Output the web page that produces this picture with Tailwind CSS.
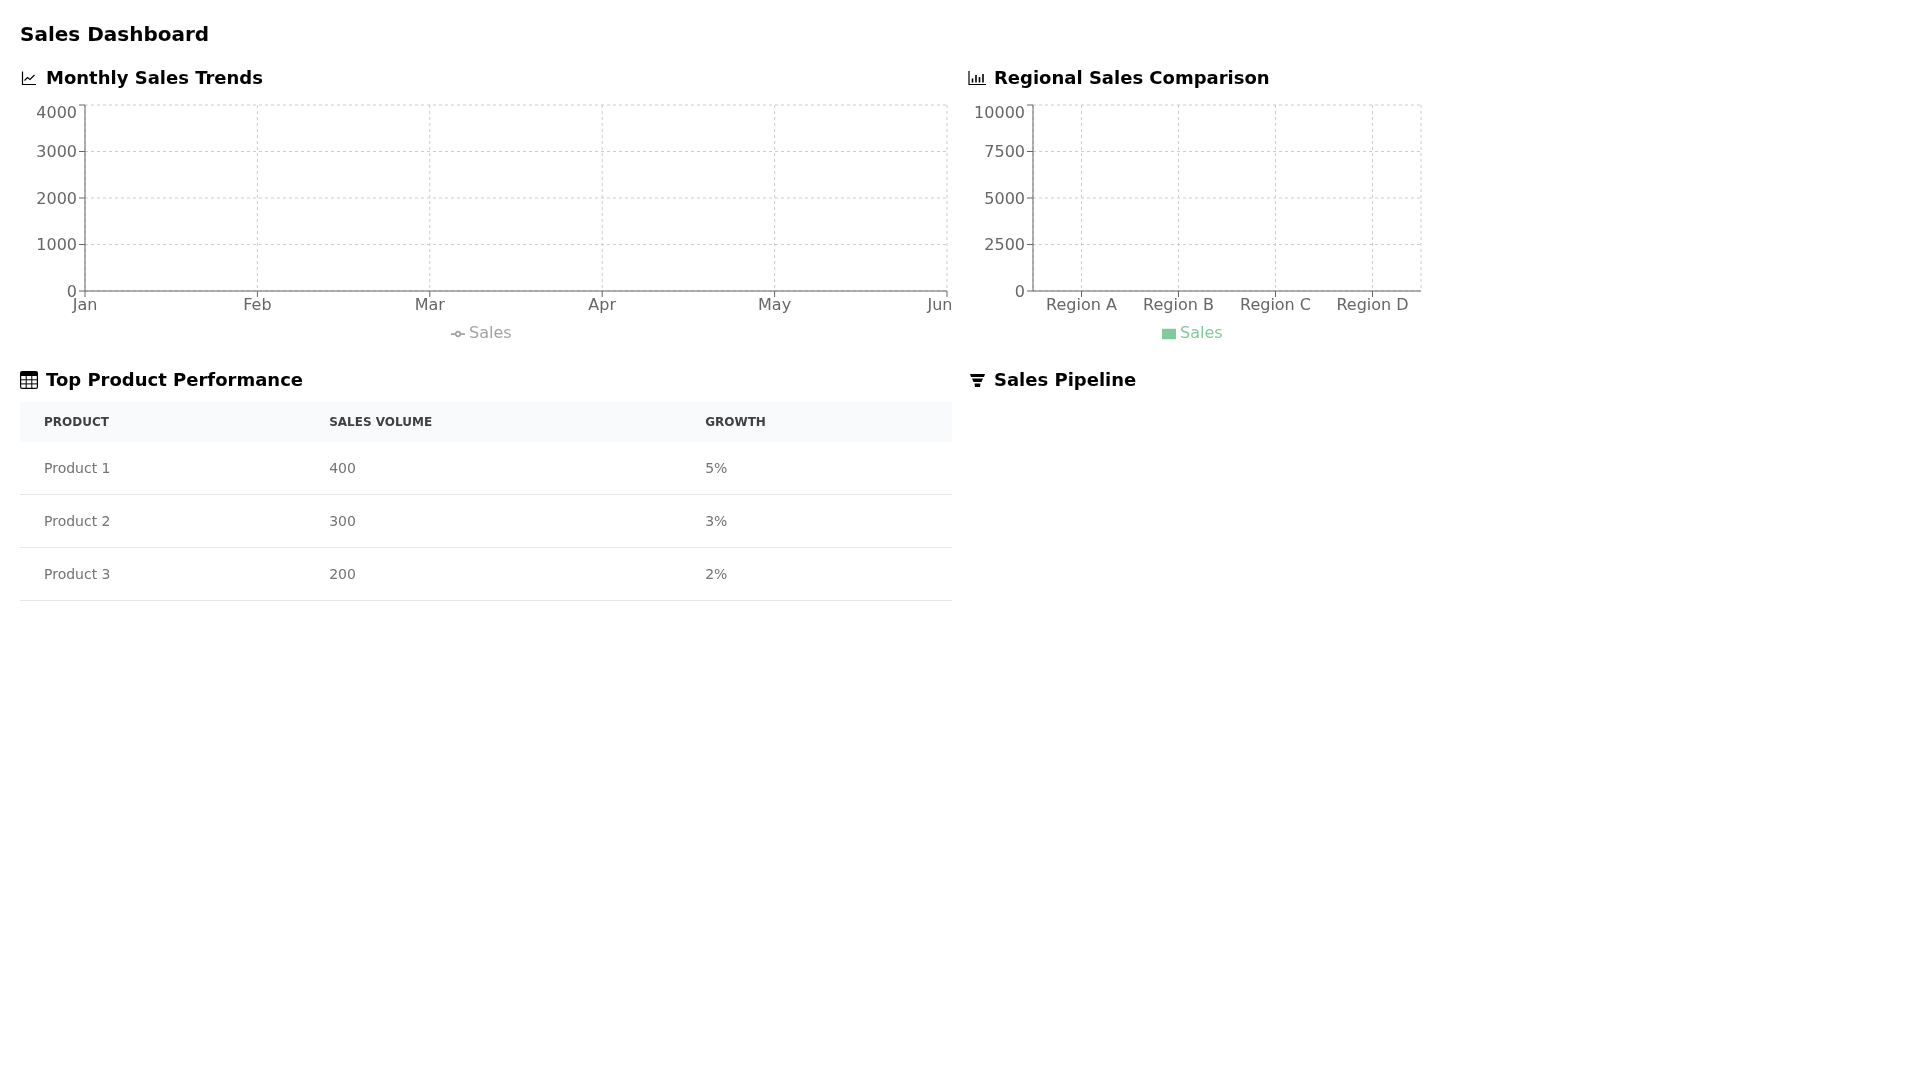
<!DOCTYPE html>
<html lang="en">
  <head>
    <meta charset="UTF-8" />
    <title>Sales Dashboard</title>
    <script src="https://cdn.jsdelivr.net/npm/@tailwindcss/browser@4"></script>
  </head>
  <body class="bg-white text-black font-['DejaVu_Sans',sans-serif]">
    <div class="p-5 will-change-transform">
      <h1 class="text-xl font-bold mb-4">Sales Dashboard</h1>
      <div class="grid grid-cols-2 gap-4">
        <!-- Monthly Sales Trends -->
        <div>
          <h2 class="text-lg font-semibold mb-2 flex items-center gap-2">
            <svg class="w-[18px] h-[18px] shrink-0" viewBox="0 0 18 18" fill="none" stroke="currentColor">
              <path d="M2.5 2.5V15.5H16" stroke-width="1.2" />
              <path d="M4.5 11.5L7.5 8.5L10 10.5L14.5 6" stroke-width="1.2" />
            </svg>
            Monthly Sales Trends
          </h2>
          <svg class="block" width="932" height="250" viewBox="0 0 932 250" font-size="16" fill="#666">
            <g stroke="#ccc" stroke-dasharray="3 3" fill="none">
              <path d="M65 5H927M65 51.5H927M65 98H927M65 144.5H927M65 191H927" />
              <path d="M65 5V191M237.4 5V191M409.8 5V191M582.2 5V191M754.6 5V191M927 5V191" />
            </g>
            <g stroke="#666" fill="none">
              <path d="M65 5V191M59 5H65M59 51.5H65M59 98H65M59 144.5H65M59 191H65" />
              <path d="M65 191H927M65 191V197M237.4 191V197M409.8 191V197M582.2 191V197M754.6 191V197M927 191V197" />
            </g>
            <g text-anchor="end">
              <text x="57" y="18">4000</text>
              <text x="57" y="57">3000</text>
              <text x="57" y="103.7">2000</text>
              <text x="57" y="150.2">1000</text>
              <text x="57" y="196.7">0</text>
            </g>
            <g text-anchor="middle">
              <text x="65" y="210.4">Jan</text>
              <text x="237.4" y="210.4">Feb</text>
              <text x="409.8" y="210.4">Mar</text>
              <text x="582.2" y="210.4">Apr</text>
              <text x="754.6" y="210.4">May</text>
              <text x="920" y="210.4">Jun</text>
            </g>
            <svg x="431" y="227" width="14" height="14" viewBox="0 0 32 32" fill="none" stroke="#a3a3a3" stroke-width="4">
              <path d="M0,16h10.67A5.33,5.33,0,1,1,21.33,16H32M21.33,16A5.33,5.33,0,1,1,10.67,16" />
            </svg>
            <text x="449" y="238" fill="#a3a3a3">Sales</text>
          </svg>
        </div>

        <!-- Regional Sales Comparison -->
        <div>
          <h2 class="text-lg font-semibold mb-2 flex items-center gap-2">
            <svg class="w-[18px] h-[18px] shrink-0" viewBox="0 0 18 18" fill="none" stroke="currentColor">
              <path d="M1 2V15.5H18" stroke-width="1.2" />
              <path d="M4.5 9.5V13.5M8 6V13.5M11.5 8V13.5M15 5V13.5" stroke-width="1.6" />
            </svg>
            Regional Sales Comparison
          </h2>
          <svg class="block" width="458" height="250" viewBox="0 0 458 250" font-size="16" fill="#666">
            <g stroke="#ccc" stroke-dasharray="3 3" fill="none">
              <path d="M65 5H453M65 51.5H453M65 98H453M65 144.5H453M65 191H453" />
              <path d="M65 5V191M113.5 5V191M210.5 5V191M307.5 5V191M404.5 5V191M453 5V191" />
            </g>
            <g stroke="#666" fill="none">
              <path d="M65 5V191M59 5H65M59 51.5H65M59 98H65M59 144.5H65M59 191H65" />
              <path d="M65 191H453M113.5 191V197M210.5 191V197M307.5 191V197M404.5 191V197" />
            </g>
            <g text-anchor="end">
              <text x="57" y="18">10000</text>
              <text x="57" y="57">7500</text>
              <text x="57" y="103.7">5000</text>
              <text x="57" y="150.2">2500</text>
              <text x="57" y="196.7">0</text>
            </g>
            <g text-anchor="middle">
              <text x="113.5" y="210.4">Region A</text>
              <text x="210.5" y="210.4">Region B</text>
              <text x="307.5" y="210.4">Region C</text>
              <text x="404.5" y="210.4">Region D</text>
            </g>
            <svg x="194" y="227" width="14" height="14" viewBox="0 0 32 32" fill="#82ca9d">
              <path d="M0,4h32v24h-32z" />
            </svg>
            <text x="212" y="238" fill="#82ca9d">Sales</text>
          </svg>
        </div>

        <!-- Top Product Performance -->
        <div>
          <h2 class="text-lg font-semibold mb-2 flex items-center gap-2">
            <svg class="w-[18px] h-[18px] shrink-0" viewBox="0 0 18 18" fill="none" stroke="currentColor">
              <rect x="0.6" y="0.6" width="16.8" height="16.8" rx="1.5" stroke-width="1.2" />
              <path d="M1 1H17V5H1Z" fill="currentColor" stroke="none" />
              <path d="M6.2 5V17M11.8 5V17M1 8.8H17M1 12.9H17" stroke-width="1" />
            </svg>
            Top Product Performance
          </h2>
          <table class="min-w-full border-collapse">
            <thead class="bg-gray-50">
              <tr>
                <th class="px-6 py-3 text-left text-xs font-bold text-[#404040] uppercase">Product</th>
                <th class="px-6 py-3 text-left text-xs font-bold text-[#404040] uppercase">Sales Volume</th>
                <th class="px-6 py-3 text-left text-xs font-bold text-[#404040] uppercase">Growth</th>
              </tr>
            </thead>
            <tbody class="text-sm text-[#737373]">
              <tr class="border-b border-gray-200">
                <td class="px-6 py-4">Product 1</td>
                <td class="px-6 py-4">400</td>
                <td class="px-6 py-4">5%</td>
              </tr>
              <tr class="border-b border-gray-200">
                <td class="px-6 py-4">Product 2</td>
                <td class="px-6 py-4">300</td>
                <td class="px-6 py-4">3%</td>
              </tr>
              <tr class="border-b border-gray-200">
                <td class="px-6 py-4">Product 3</td>
                <td class="px-6 py-4">200</td>
                <td class="px-6 py-4">2%</td>
              </tr>
            </tbody>
          </table>
        </div>

        <!-- Sales Pipeline -->
        <div>
          <h2 class="text-lg font-semibold mb-2 flex items-center gap-2">
            <svg class="w-[18px] h-[18px] shrink-0" viewBox="0 0 18 18" fill="currentColor">
              <path d="M2 3H17L16 6H3ZM4 7.5H15L13.5 11H5.5ZM6.5 12.5H12.5L12 16H7Z" />
            </svg>
            Sales Pipeline
          </h2>
        </div>
      </div>
    </div>
  </body>
</html>
